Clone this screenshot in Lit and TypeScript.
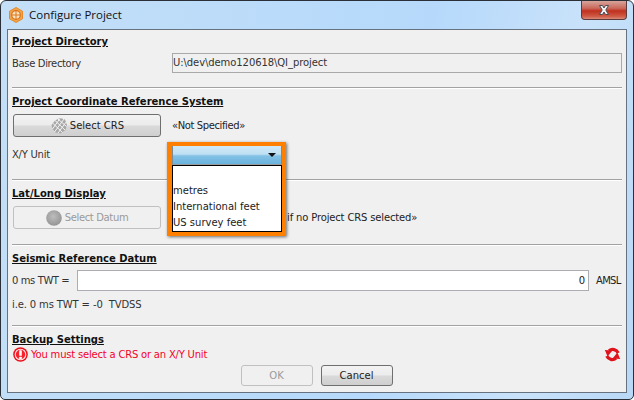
import { LitElement, html, css, svg } from "lit";
import { customElement } from "lit/decorators.js";

const logo = html`<svg class="logo" width="16" height="16" viewBox="0 0 16 16">
  <path d="M8 .5 14.500 4.200v7.600L8 15.500 1.500 11.800V4.200z" fill="#f0a24c" stroke="#e58a2a"/>
  <circle cx="8" cy="8" r="4.300" fill="#fbe3c2" stroke="#d9771d" stroke-width="1.200"/>
  <path d="M8 3.500v9M3.500 8h9" stroke="#d9771d" stroke-width="1"/>
</svg>`;

const globe = html`<svg class="btn-icon" width="18" height="18" viewBox="0 0 18 18" fill="none">
  <path d="M1.500 8 5 3.500 10 1 15 2.500 17 8 15.500 13 10.500 16.500 5.500 15.500 2.500 12Z" fill="#a8a8a8"/>
  <path d="M2.500 6 12.500 15.500M5 3.500 15 13M8 2 16.500 9.500M4.500 15 14 2M2.500 12 10 1.500M8 16 16.200 5" stroke="#f4f4f4" stroke-width="1"/>
</svg>`;

const datum = html`<svg class="btn-icon" width="16" height="16" viewBox="0 0 16 16">
  <defs><radialGradient id="dg" cx=".45" cy=".4" r=".7"><stop offset="0" stop-color="#bdbdbd"/><stop offset="1" stop-color="#8f8f8f"/></radialGradient></defs>
  <circle cx="8" cy="8" r="7.800" fill="url(#dg)"/>
</svg>`;

const errorIcon = html`<svg class="err-icon" width="15" height="15" viewBox="0 0 15 15">
  <circle cx="7.500" cy="7.500" r="7.300" fill="#e8101c"/>
  <circle cx="7.500" cy="7.500" r="5.300" fill="#f4232c" stroke="#ffe0e0" stroke-width="1.100"/>
  <rect x="6.200" y="3.200" width="2.600" height="5.600" rx=".6" fill="#fff"/>
  <rect x="6.200" y="9.700" width="2.600" height="2.300" rx=".6" fill="#fff"/>
</svg>`;

const refreshArc = svg`<path d="M14.200 7A6 6 0 0 0 5 4.800" fill="none" stroke="currentColor" stroke-width="3.200"/>
  <path d="M.8 4 8.400 4.400 3.600 10.400Z" fill="currentColor"/>`;

const refresh = html`<svg class="refresh" width="17" height="17" viewBox="0 0 17 17">
  ${refreshArc}
  <g transform="rotate(180 8.500 8.500)">${refreshArc}</g>
</svg>`;

const closeX = svg`<path d="M4.500 1.500H7.500L9 4 10.500 1.500H13.500L10.800 6 13.500 10.500H10.500L9 8 7.500 10.500H4.500L7.200 6Z" fill="#f4f4f4" stroke="#4a4a52" stroke-width="1"/>`;

@customElement("app-root")
export class AppRoot extends LitElement {
  static styles = css`
    :host {
      display: block;
      width: 634px;
      height: 400px;
      background: #fff;
      font-family: "DejaVu Sans", Tahoma, sans-serif;
      font-size: 10px;
      color: #1c1c1c;
      overflow: hidden;
    }
    .window {
      box-sizing: border-box;
      width: 634px;
      height: 400px;
      border: 1px solid #2b3038;
      border-radius: 6px 6px 5px 5px;
      background: linear-gradient(100deg, #c4dff7 0%, #bcdcf9 30%, #b6d9fb 62%, #c9e2fa 84%, #b8d8f6 100%);
      display: flex;
      flex-direction: column;
      overflow: hidden;
    }
    .titlebar {
      height: 28px;
      flex: none;
      display: flex;
      align-items: flex-start;
      padding-left: 7px;
      box-sizing: border-box;
    }
    .logo {
      margin-top: 6px;
      flex: none;
    }
    .title {
      margin: 6px 0 0 5px;
      font-family: "Open Sans", "Noto Sans", sans-serif;
      font-size: 11.500px;
      line-height: 15px;
      color: #111;
    }
    .close {
      margin-left: auto;
      margin-right: 6px;
      width: 46px;
      height: 19px;
      box-sizing: border-box;
      border: 1px solid #5c3a3c;
      border-top: none;
      border-radius: 0 0 4px 4px;
      background: linear-gradient(#d8a49b 0%, #c9695b 40%, #c0301f 55%, #cf5a44 85%, #d98a7a 100%);
      display: flex;
      align-items: center;
      justify-content: center;
    }
    .panel {
      flex: 1;
      margin: 0 6px 6px 6px;
      border: 1px solid #66727f;
      background: #f0f0f0;
      padding: 0 4px;
      display: flex;
      flex-direction: column;
      min-height: 0;
    }
    .section {
      flex: none;
      box-sizing: border-box;
      border-bottom: 1px solid #a2a2a2;
      box-shadow: 0 1px 0 #fff;
      padding-top: 7px;
    }
    .s1 { height: 58px; padding-top: 5px; }
    .s2 { height: 92px; }
    .s3 { height: 65px; }
    .s4 { height: 81px; }
    .s5 {
      flex: 1;
      border: none;
      box-shadow: none;
      display: flex;
      flex-direction: column;
    }
    h2 {
      margin: 0;
      font-size: 10px;
      line-height: 14px;
      font-weight: 700;
      color: #111;
      text-decoration: underline;
    }
    .row {
      display: flex;
      align-items: center;
    }
    .label {
      width: 160px;
      flex: none;
      color: #333;
      letter-spacing: -0.35px;
    }
    .dir {
      flex: 1;
      box-sizing: border-box;
      height: 20px;
      border: 1px solid #a9a9a9;
      line-height: 17px;
      color: #333;
      letter-spacing: -0.08px;
    }
    .s1 .row { margin-top: 4px; }
    button {
      font: inherit;
      color: #222;
      box-sizing: border-box;
      width: 148px;
      height: 23px;
      margin: 0;
      padding: 0;
      border: 1px solid #6f6f6f;
      border-radius: 3px;
      background: linear-gradient(#f3f3f3 0%, #ececec 45%, #d9d9d9 55%, #cfcfcf 100%);
      display: flex;
      align-items: center;
      justify-content: center;
      gap: 2px;
    }
    button.off {
      border-color: #c0c0c0;
      background: #f0f0f0;
      color: #9a9a9a;
    }
    button.datum {
      letter-spacing: -0.35px;
    }
    button.datum .btn-icon {
      margin-right: 1px;
    }
    .btn-row {
      padding-left: 1px;
      margin-top: 5px;
    }
    .btn-row .after {
      margin-left: 11px;
      color: #222;
      letter-spacing: -0.4px;
    }
    .unit {
      position: relative;
      margin-top: 5px;
      height: 24px;
      color: #333;
      letter-spacing: -0.25px;
    }
    .popup {
      position: absolute;
      left: 155px;
      top: 0;
      box-sizing: border-box;
      width: 119px;
      height: 94px;
      border: 4px solid #ff7f00;
      border-left-width: 5px;
      background: #f0f0f0;
      box-shadow: 1px 1px 3px rgba(0, 0, 0, 0.55);
      z-index: 5;
      letter-spacing: 0;
    }
    .combo {
      box-sizing: border-box;
      height: 19px;
      border-left: 1px solid #7d8a94;
      border-right: 1px solid #7d8a94;
      border-bottom: 1px solid #9a9a9a;
      background: linear-gradient(#cfe8f6 0%, #bfe0f3 45%, #84c1e5 55%, #68b2dd 100%);
      display: flex;
      align-items: center;
      justify-content: flex-end;
      padding-right: 5px;
    }
    .arrow {
      width: 0;
      height: 0;
      border-left: 4px solid transparent;
      border-right: 4px solid transparent;
      border-top: 4px solid #111;
    }
    .list {
      box-sizing: border-box;
      height: 67px;
      border: 1px solid #000;
      background: #fff;
      padding-top: 17px;
      color: #1c1c1c;
    }
    .list div {
      height: 16px;
      line-height: 16px;
    }
    .hint {
      margin-left: 126px;
      white-space: nowrap;
      color: #222;
      letter-spacing: -0.15px;
    }
    .twt {
      margin-top: 4px;
      height: 21px;
    }
    .twt .k {
      width: 65px;
      flex: none;
      color: #333;
      letter-spacing: -0.4px;
    }
    .num {
      box-sizing: border-box;
      width: 512px;
      height: 21px;
      flex: none;
      background: #fff;
      border: 1px solid #abadb3;
      text-align: right;
      line-height: 19px;
      padding-right: 3px;
      color: #222;
    }
    .amsl {
      margin-left: 7px;
      color: #222;
      letter-spacing: -0.7px;
    }
    .tvd {
      margin-top: 7px;
      line-height: 14px;
      color: #333;
      letter-spacing: -0.13px;
    }
    .status {
      height: 16px;
      margin-top: -1px;
      padding-left: 1px;
    }
    .err-icon {
      flex: none;
      margin-right: 3px;
    }
    .err {
      color: #f5002a;
      letter-spacing: -0.2px;
    }
    .refresh {
      margin-left: auto;
      margin-right: 1px;
      flex: none;
      color: #e0141c;
    }
    .actions {
      display: flex;
      justify-content: center;
      gap: 8px;
      margin-top: 3px;
      padding-right: 1px;
    }
    .actions button {
      width: 72px;
      height: 21px;
    }
  `;

  render() {
    return html`<div class="window">
      <div class="titlebar">
        ${logo}
        <span class="title">Configure Project</span>
        <div class="close"><svg width="18" height="12" viewBox="0 0 18 12">${closeX}</svg></div>
      </div>
      <div class="panel">
        <section class="section s1">
          <h2>Project Directory</h2>
          <div class="row">
            <span class="label">Base Directory</span>
            <div class="dir">U:\\dev\\demo120618\\QI_project</div>
          </div>
        </section>
        <section class="section s2">
          <h2>Project Coordinate Reference System</h2>
          <div class="row btn-row">
            <button>${globe}Select CRS</button>
            <span class="after">«Not Specified»</span>
          </div>
          <div class="row unit">
            X/Y Unit
            <div class="popup">
              <div class="combo"><span class="arrow"></span></div>
              <div class="list">
                <div>metres</div>
                <div>International feet</div>
                <div>US survey feet</div>
              </div>
            </div>
          </div>
        </section>
        <section class="section s3">
          <h2>Lat/Long Display</h2>
          <div class="row btn-row">
            <button class="off datum">${datum}Select Datum</button>
            <span class="hint">if no Project CRS selected»</span>
          </div>
        </section>
        <section class="section s4">
          <h2>Seismic Reference Datum</h2>
          <div class="row twt">
            <span class="k">0 ms TWT =</span>
            <div class="num">0</div>
            <span class="amsl">AMSL</span>
          </div>
          <div class="tvd">i.e. 0 ms TWT = -0&nbsp; TVDSS</div>
        </section>
        <section class="section s5">
          <h2>Backup Settings</h2>
          <div class="row status">
            ${errorIcon}
            <span class="err">You must select a CRS or an X/Y Unit</span>
            ${refresh}
          </div>
          <div class="actions">
            <button class="off">OK</button>
            <button>Cancel</button>
          </div>
        </section>
      </div>
    </div>`;
  }
}
